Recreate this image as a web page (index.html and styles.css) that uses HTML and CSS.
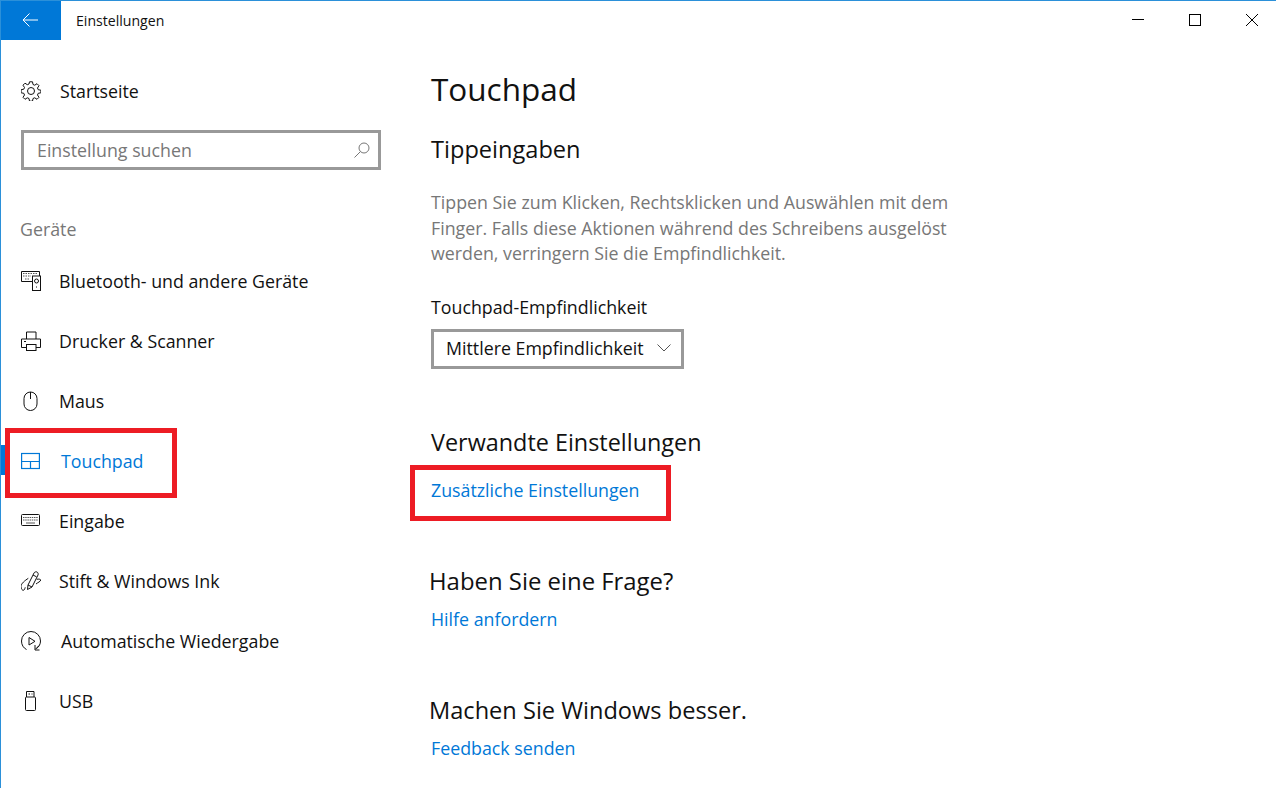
FILE: index.html
```html
<!DOCTYPE html>
<html lang="de">
<head>
    <meta charset="UTF-8">
    <title>Einstellungen</title>
    <link rel="stylesheet" href="styles.css">
</head>
<body>
    <div class="window">
        <div class="titlebar">
            <div class="back-btn">
                <svg width="16" height="14" viewBox="0 0 16 14" fill="none" stroke="#fff" stroke-width="1"><path d="M7.500 .5L1 7l6.500 6.500M1 7h15"/></svg>
            </div>
            <div class="app-title">Einstellungen</div>
            <div class="window-controls">
                <svg width="12" height="12" viewBox="0 0 12 12" stroke="#000" fill="none"><path d="M0 5.500h12"/></svg>
                <svg width="12" height="12" viewBox="0 0 12 12" stroke="#000" fill="none"><rect x=".5" y=".5" width="11" height="11"/></svg>
                <svg width="12" height="12" viewBox="0 0 12 12" stroke="#000" fill="none"><path d="M0 0l12 12M12 0L0 12"/></svg>
            </div>
        </div>

        <div class="content">
            <div class="sidebar">
                <div class="home-row">
                    <svg class="nav-icon" width="20" height="20" viewBox="0 0 20 20" fill="none" stroke="#111" stroke-width="1"><circle cx="10" cy="10" r="3.500"/><path d="M8.500 .8h3l.5 2.700 1.700.7 2.300-1.500 2 2-1.500 2.300.7 1.700 2.700.5v2.600l-2.700.5-.7 1.700 1.500 2.300-2 2-2.300-1.500-1.700.7-.5 2.700h-3l-.5-2.700-1.700-.7-2.300 1.500-2-2 1.500-2.300-.7-1.700-2.700-.5V8.700l2.700-.5.7-1.700-1.500-2.300 2-2 2.300 1.500 1.700-.7z"/></svg>
                    <span>Startseite</span>
                </div>
                <div class="search-box">
                    <span>Einstellung suchen</span>
                    <svg width="16" height="16" viewBox="0 0 16 16" fill="none" stroke="#777"><circle cx="10" cy="6" r="5"/><path d="M6.500 9.500L.5 15.500"/></svg>
                </div>
                <div class="group-label">Geräte</div>

                <div class="nav-item">
                    <svg class="nav-icon" width="20" height="20" viewBox="0 0 20 20" fill="none" stroke="#111"><path d="M11 10.500H.5v-10h18v4.500"/><rect x="11.500" y="5" width="8" height="14.500"/><circle cx="15.500" cy="10" r="2"/><path d="M15 16h1"/><path d="M2 2.500h14M2 5h8M4 8h5" stroke="#555" stroke-dasharray="1.500 1"/></svg>
                    <span>Bluetooth- und andere Geräte</span>
                </div>
                <div class="nav-item">
                    <svg class="nav-icon" width="20" height="20" viewBox="0 0 20 20" fill="none" stroke="#111"><path d="M5.500 8V1h9.500v7M5.500 16.500H.5v-8.500h19v8.500h-4.500"/><rect x="5.500" y="13.500" width="9.500" height="6"/><path d="M3 10.500h2"/></svg>
                    <span>Drucker &amp; Scanner</span>
                </div>
                <div class="nav-item">
                    <svg class="nav-icon" width="20" height="20" viewBox="0 0 20 20" fill="none" stroke="#111"><rect x="3" y="1" width="13" height="18.500" rx="6.500"/><path d="M9.500 1v7"/></svg>
                    <span>Maus</span>
                </div>
                <div class="nav-item active">
                    <span class="active-mark"></span>
                    <svg class="nav-icon" width="20" height="20" viewBox="0 0 20 20" fill="none" stroke="#0078d7" stroke-width="1.200"><rect x=".6" y="2.500" width="17.800" height="15"/><path d="M.6 10.500h17.800M9.500 10.500v7"/></svg>
                    <span class="nudge">Touchpad</span>
                </div>
                <div class="nav-item">
                    <svg class="nav-icon" width="20" height="20" viewBox="0 0 20 20" fill="none" stroke="#111"><rect x=".5" y="3.500" width="18" height="11" rx="1"/><path d="M2 6.500h15M2 9h15" stroke-dasharray="1.500 .7" stroke="#555"/><path d="M5 12h9" stroke="#555"/></svg>
                    <span>Eingabe</span>
                </div>
                <div class="nav-item">
                    <svg class="nav-icon" width="20" height="20" viewBox="0 0 20 20" fill="none" stroke="#111"><path d="M6.500 18.500L7 14 13 2c.5-1 2-1.500 3-1s1.500 2 1 3L11 16zM12 4l3.500 1.800M7 14l4 2M15.700 8.300c2-.5 4 0 4 .7 0 1.500-3 2.500-4.700 4M7.300 7.300C4 9.500 0 12.500 0 15.500c0 3 2 4.500 3 3.500s.800-2 1.300-2.700"/></svg>
                    <span>Stift &amp; Windows Ink</span>
                </div>
                <div class="nav-item">
                    <svg class="nav-icon" width="20" height="20" viewBox="0 0 20 20" fill="none" stroke="#111"><path d="M5.500 18.500C2.500 17 .5 14 .5 10a9.500 9.500 0 0 1 19 0c0 3-1.500 6-4 7.500"/><path d="M8 6.500v7.500l6-3.700z"/><path d="M18 14.500l-3.500 3.700M14 14v5h4.500"/></svg>
                    <span class="nudge">Automatische Wiedergabe</span>
                </div>
                <div class="nav-item">
                    <svg class="nav-icon" width="20" height="20" viewBox="0 0 20 20" fill="none" stroke="#111"><path d="M5.500 6V.5h7.500V6"/><rect x="4.500" y="6" width="10" height="13.500" rx="1"/><path d="M7.500 3h1.500M10.500 3h1"/></svg>
                    <span>USB</span>
                </div>
            </div>

            <div class="main">
                <h1>Touchpad</h1>
                <h2 class="first-heading">Tippeingaben</h2>
                <p class="desc">Tippen Sie zum Klicken, Rechtsklicken und Auswählen mit dem Finger. Falls diese Aktionen während des Schreibens ausgelöst werden, verringern Sie die Empfindlichkeit.</p>
                <div class="field-label">Touchpad-Empfindlichkeit</div>
                <div class="select-box">
                    <span>Mittlere Empfindlichkeit</span>
                    <svg width="14" height="8" viewBox="0 0 14 8" fill="none" stroke="#555"><path d="M.5 .5L7 7l6.500-6.500"/></svg>
                </div>
                <h2 class="related">Verwandte Einstellungen</h2>
                <a class="link first-link">Zusätzliche Einstellungen</a>
                <h2 class="question">Haben Sie eine Frage?</h2>
                <a class="link">Hilfe anfordern</a>
                <h2 class="better">Machen Sie Windows besser.</h2>
                <a class="link">Feedback senden</a>
            </div>
        </div>

        <div class="mark mark-nav"></div>
        <div class="mark mark-link"></div>
    </div>
</body>
</html>
```

FILE: styles.css
```css
body {
    margin: 0;
    background-color: #fff;
    font-family: "Open Sans", "Noto Sans", sans-serif;
    color: #111;
    overflow: hidden;
}

.window {
    position: relative;
    width: 1276px;
    height: 788px;
    box-sizing: border-box;
    border-top: 1px solid #2b90d9;
    border-left: 1px solid #2b90d9;
    overflow: hidden;
}

.titlebar {
    display: flex;
    align-items: center;
    height: 39px;
}

.back-btn {
    width: 60px;
    height: 39px;
    padding: 0 2px 1px 0;
    box-sizing: border-box;
    background-color: #0078d7;
    display: flex;
    justify-content: center;
    align-items: center;
}

.app-title {
    margin-left: 15px;
    margin-bottom: 1px;
    font-size: 14.1px;
}

.window-controls {
    margin-left: auto;
    margin-bottom: 1px;
    display: flex;
    gap: 45px;
    padding-right: 18px;
}

.content {
    display: flex;
}

.sidebar {
    width: 430px;
    flex-shrink: 0;
    padding-left: 20px;
    box-sizing: border-box;
}

.home-row {
    display: flex;
    align-items: center;
    height: 24px;
    margin-top: 39px;
    font-size: 17.8px;
}

.nav-icon {
    width: 20px;
    flex-shrink: 0;
    margin-right: 19px;
}

.search-box {
    width: 360px;
    height: 40px;
    box-sizing: border-box;
    border: 3px solid #999;
    margin-top: 27px;
    padding: 0 8px 0 13px;
    display: flex;
    align-items: center;
    justify-content: space-between;
    font-size: 17.8px;
    color: #777;
}

.group-label {
    margin-top: 47px;
    margin-left: -1px;
    height: 24px;
    line-height: 24px;
    font-size: 17.8px;
    color: #777;
}

.nav-item {
    position: relative;
    display: flex;
    align-items: center;
    height: 60px;
    font-size: 17.8px;
}

.nav-item .nav-icon {
    margin-right: 18px;
}

.group-label + .nav-item {
    margin-top: 10px;
}

.nav-item.active {
    color: #0078d7;
}

.active-mark {
    position: absolute;
    left: -20px;
    top: 14px;
    width: 5px;
    height: 30px;
    background-color: #0078d7;
}

.nudge {
    margin-left: 2px;
}

.main {
    flex: 1;
}

h1 {
    margin: 25px 0 0;
    font-size: 31.5px;
    font-weight: 400;
    line-height: 48px;
}

h2 {
    margin: 0;
    font-size: 23.6px;
    font-weight: 400;
    line-height: 32px;
}

.first-heading {
    margin-top: 20px;
}

.desc {
    width: 535px;
    margin: 25px 0 0;
    font-size: 17.8px;
    line-height: 25.5px;
    color: #777;
}

.field-label {
    margin-top: 28px;
    font-size: 17.8px;
    line-height: 24px;
}

.select-box {
    display: inline-flex;
    align-items: center;
    gap: 13px;
    height: 40px;
    box-sizing: border-box;
    margin-top: 10px;
    padding: 0 10px 2px 12px;
    border: 3px solid #999;
    font-size: 17.8px;
}

.related {
    margin-top: 57px;
    font-size: 23.4px;
}

.link {
    display: block;
    margin-top: 10px;
    font-size: 17.8px;
    line-height: 24px;
    color: #0078d7;
}

.first-link {
    margin-top: 20px;
}

.question,
.better {
    margin-left: -2px;
}

.question {
    margin-top: 63px;
    font-size: 23.9px;
}

.better {
    margin-top: 63px;
}

.mark {
    position: absolute;
    border: 5px solid #ed1c24;
    box-sizing: border-box;
}

.mark-nav {
    left: 4px;
    top: 427px;
    width: 172px;
    height: 70px;
}

.mark-link {
    left: 409px;
    top: 464px;
    width: 261px;
    height: 56px;
}
```
